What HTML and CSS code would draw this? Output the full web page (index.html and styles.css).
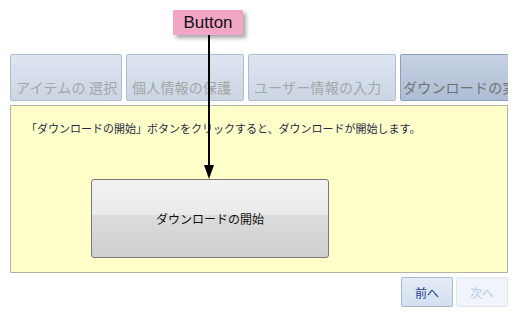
FILE: index.html
```html
<!DOCTYPE html>
<html lang="ja">
<head>
    <meta charset="UTF-8">
    <title>ダウンロードの実行</title>
    <link rel="stylesheet" href="styles.css">
</head>
<body>
    <!-- Anotação -->
    <div class="callout">
        <div class="callout-label">Button</div>
        <svg class="callout-arrow" width="12" height="144" viewBox="0 0 12 144">
            <rect x="5" y="0" width="2" height="132" fill="#000"/>
            <polygon points="1,130 11,130 6,144" fill="#000"/>
        </svg>
    </div>

    <div class="wizard">
        <!-- Abas -->
        <div class="steps">
            <div class="step">アイテムの 選択</div>
            <div class="step step-2">個人情報の保護</div>
            <div class="step step-3">ユーザー情報の入力</div>
            <div class="step step-active">ダウンロードの実行</div>
        </div>

        <div class="panel">
            <p class="panel-text">「ダウンロードの開始」ボタンをクリックすると、ダウンロードが開始します。</p>
            <button class="download-button">ダウンロードの開始</button>
        </div>

        <div class="nav">
            <button class="nav-btn">前へ</button>
            <button class="nav-btn nav-btn-disabled">次へ</button>
        </div>
    </div>
</body>
</html>
```

FILE: styles.css
```css
body {
    background-color: #ffffff;
    font-family: "Noto Sans CJK JP", "Liberation Sans", sans-serif;
    margin: 0;
    padding: 0;
}

/* Anotação */
.callout {
    position: absolute;
    left: 173px;
    top: 10px;
    width: 70px;
}

.callout-label {
    background-color: #f2a6c6;
    color: #111;
    font-family: "Liberation Sans", sans-serif;
    font-size: 17px;
    height: 25px;
    line-height: 25px;
    text-align: center;
    box-shadow: 3px 3px 4px rgba(0, 0, 0, 0.35);
}

.callout-arrow {
    position: absolute;
    left: 30px;
    top: 25px;
}

.wizard {
    width: 498px;
    margin-left: 10px;
    padding-top: 54px;
}

/* Abas */
.steps {
    display: flex;
    gap: 4px;
    overflow: hidden;
    height: 47px;
    margin-bottom: 4px;
}

.step {
    flex-shrink: 0;
    width: 110px;
    height: 45px;
    border: 1px solid #aebdd3;
    border-radius: 2px;
    background: linear-gradient(#dee6f1, #cbd5e3);
    color: #a6a6a6;
    font-size: 14px;
    letter-spacing: 0.2px;
    padding-left: 5px;
    box-sizing: content-box;
    line-height: 64px;
    white-space: nowrap;
    overflow: hidden;
}

.step:first-child {
    width: 105px;
}

.step-2 {
    width: 111px;
}

.step-3 {
    width: 141px;
}

.step-active {
    width: 150px;
    padding-left: 2px;
    border-color: #8d9fbd;
    background: linear-gradient(#c7d2e3, #aebdd5);
    color: #727272;
}

/* Painel */
.panel {
    border: 1px solid #b3b3a3;
    background-color: #ffffc9;
    padding: 14px 15px;
    box-sizing: content-box;
    height: 138px;
}

.panel-text {
    margin: 0;
    font-size: 11px;
    line-height: 16px;
    color: #1f2a44;
}

.download-button {
    display: block;
    margin: 43px 0 0 65px;
    width: 238px;
    height: 79px;
    border: 1px solid #7a7a7a;
    border-radius: 3px;
    background: linear-gradient(#f2f2f2 0%, #e9e9e9 45%, #dcdcdc 46%, #cfcfcf 100%);
    font-family: "Noto Sans CJK JP", sans-serif;
    font-size: 12px;
    color: #111;
    padding: 0;
}

/* Navegação */
.nav {
    display: flex;
    justify-content: flex-end;
    gap: 3px;
    margin-top: 4px;
}

.nav-btn {
    width: 52px;
    height: 30px;
    border: 1px solid #a7bad4;
    border-radius: 2px;
    background: linear-gradient(#e4ecf7, #d3dff0);
    color: #23438f;
    font-family: "Noto Sans CJK JP", sans-serif;
    font-size: 12px;
    padding: 0;
}

.nav-btn-disabled {
    border-color: #dfe5ee;
    background: #f1f4fa;
    color: #b9c9e8;
}
```
